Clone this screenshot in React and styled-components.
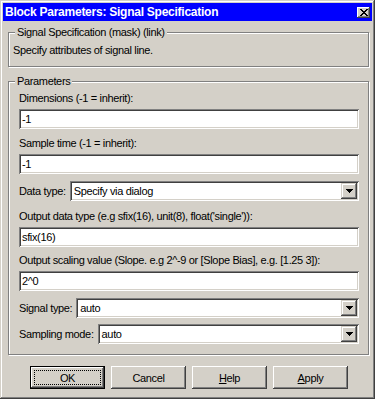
import React from 'react';
import styled, { createGlobalStyle } from 'styled-components';

const GlobalStyle = createGlobalStyle`
  html, body { margin: 0; padding: 0; background: #d4d0c8; }
  body { font-family: "Liberation Sans", Arial, sans-serif; }
  * { box-sizing: border-box; }
`;

const Window = styled.div`
  width: 375px;
  height: 399px;
  padding: 3px;
  background: #d4d0c8;
  box-shadow: inset -1px -1px #404040, inset 1px 1px #d4d0c8,
    inset -2px -2px #808080, inset 2px 2px #ffffff;
  display: flex;
  flex-direction: column;
  font-family: "Liberation Sans", Arial, sans-serif;
  font-size: 11px;
  letter-spacing: -0.35px;
  color: #000;
`;

const TitleBar = styled.div`
  height: 18px;
  background: #0000ff;
  display: flex;
  align-items: center;
  justify-content: space-between;
  padding: 0 2px 0 2px;
`;

const TitleText = styled.span`
  color: #fff;
  font-weight: bold;
  font-size: 12px;
  letter-spacing: -0.25px;
  line-height: 18px;
`;

const CloseBtn = styled.div`
  width: 13px;
  height: 11px;
  background: #d4d0c8;
  box-shadow: inset -1px -1px #404040, inset 1px 1px #ffffff,
    inset -2px -2px #808080;
  display: flex;
  align-items: center;
  justify-content: center;
`;

const Body = styled.div`
  display: flex;
  flex-direction: column;
  padding: 0 3px 0 5px;
`;

const Group = styled.div`
  position: relative;
  height: ${(p) => p.$h}px;
  margin-top: ${(p) => p.$mt}px;
  border: 1px solid #808080;
  box-shadow: inset 1px 1px #ffffff, 1px 1px #ffffff;
  padding: ${(p) => p.$pad};
  display: flex;
  flex-direction: column;
`;

const Legend = styled.span`
  position: absolute;
  top: -7px;
  left: 6px;
  padding: 0 2px;
  background: #d4d0c8;
  line-height: 13px;
`;

const Text = styled.div`
  line-height: 13px;
  height: 13px;
  white-space: nowrap;
  margin-top: ${(p) => p.$mt || 0}px;
`;

const sunken = `
  background: #ffffff;
  box-shadow: inset 1px 1px #808080, inset -1px -1px #ffffff,
    inset 2px 2px #404040, inset -2px -2px #d4d0c8;
`;

const TextBox = styled.div`
  ${sunken}
  height: 20px;
  margin-top: ${(p) => p.$mt || 0}px;
  padding: 0 3px 0 3px;
  display: flex;
  align-items: center;
  white-space: nowrap;
`;

const SelectRow = styled.div`
  display: flex;
  align-items: center;
  gap: 4px;
  margin-top: ${(p) => p.$mt || 0}px;
`;

const SelectBox = styled.div`
  ${sunken}
  flex: 1;
  height: 20px;
  padding: 2px 2px 2px 4px;
  display: flex;
  align-items: center;
  justify-content: space-between;
`;

const ArrowBtn = styled.div`
  width: 16px;
  height: 16px;
  background: #d4d0c8;
  box-shadow: inset -1px -1px #404040, inset 1px 1px #d4d0c8,
    inset -2px -2px #808080, inset 2px 2px #ffffff;
  display: flex;
  align-items: center;
  justify-content: center;
`;

const ButtonRow = styled.div`
  display: flex;
  justify-content: center;
  gap: 6px;
  margin-top: 11px;
  padding-left: 1px;
`;

const Button = styled.div`
  position: relative;
  width: 75px;
  height: 23px;
  background: #d4d0c8;
  display: flex;
  align-items: center;
  justify-content: center;
  box-shadow: ${(p) =>
    p.$default
      ? 'inset 0 0 0 1px #000, inset -2px -2px #404040, inset 2px 2px #ffffff, inset -3px -3px #808080'
      : 'inset -1px -1px #404040, inset 1px 1px #ffffff, inset -2px -2px #808080'};
`;

const Focus = styled.span`
  position: absolute;
  left: 4px;
  top: 4px;
  right: 4px;
  bottom: 4px;
  border: 1px dotted #000;
`;

const U = styled.span`
  text-decoration: underline;
`;

const Arrow = () => (
  <svg width="7" height="4" viewBox="0 0 7 4">
    <path d="M0 0h7v1h-1v1h-1v1h-1v1h-1v-1h-1v-1h-1v-1h-1z" fill="#000" />
  </svg>
);

const Select = ({ label, value, mt }) => (
  <SelectRow $mt={mt}>
    <span>{label}</span>
    <SelectBox>
      <span>{value}</span>
      <ArrowBtn>
        <Arrow />
      </ArrowBtn>
    </SelectBox>
  </SelectRow>
);

export default function App() {
  return (
    <>
      <GlobalStyle />
      <Window>
        <TitleBar>
          <TitleText>Block Parameters: Signal Specification</TitleText>
          <CloseBtn>
            <svg width="8" height="7" viewBox="0 0 8 7">
              <path
                d="M0 0h2v1h1v1h2v-1h1v-1h2v1h-1v1h-1v1h-1v1h1v1h1v1h1v1h-2v-1h-1v-1h-2v1h-1v1h-2v-1h1v-1h1v-1h1v-1h-1v-1h-1v-1h-1z"
                fill="#000"
              />
            </svg>
          </CloseBtn>
        </TitleBar>
        <Body>
          <Group $h={35} $mt={11} $pad="11px 4px 0 4px">
            <Legend>Signal Specification (mask) (link)</Legend>
            <Text>Specify attributes of signal line.</Text>
          </Group>
          <Group $h={274} $mt={14} $pad="10px 9px 0 10px">
            <Legend>Parameters</Legend>
            <Text>Dimensions (-1 = inherit):</Text>
            <TextBox $mt={4}>-1</TextBox>
            <Text $mt={8}>Sample time (-1 = inherit):</Text>
            <TextBox $mt={4}>-1</TextBox>
            <Select label="Data type:" value="Specify via dialog" mt={7} />
            <Text $mt={9}>Output data type (e.g sfix(16), unit(8), float('single')):</Text>
            <TextBox $mt={4}>sfix(16)</TextBox>
            <Text $mt={7}>Output scaling value (Slope. e.g 2^-9 or [Slope Bias], e.g. [1.25 3]):</Text>
            <TextBox $mt={4}>2^0</TextBox>
            <Select label="Signal type:" value="auto" mt={7} />
            <Select label="Sampling mode:" value="auto" mt={6} />
          </Group>
          <ButtonRow>
            <Button $default>
              <Focus />
              OK
            </Button>
            <Button>Cancel</Button>
            <Button>
              <span>
                <U>H</U>elp
              </span>
            </Button>
            <Button>
              <span>
                <U>A</U>pply
              </span>
            </Button>
          </ButtonRow>
        </Body>
      </Window>
    </>
  );
}
